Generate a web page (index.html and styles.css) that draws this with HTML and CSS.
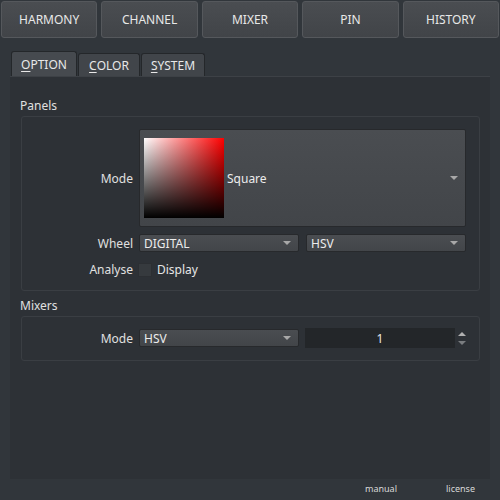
FILE: index.html
```html
<!DOCTYPE html>
<html>
<head>
<meta charset="utf-8">
<link rel="stylesheet" href="styles.css">
</head>
<body>
<div class="topbar">
  <div class="tbtn">HARMONY</div>
  <div class="tbtn">CHANNEL</div>
  <div class="tbtn">MIXER</div>
  <div class="tbtn">PIN</div>
  <div class="tbtn">HISTORY</div>
</div>
<div class="tabs">
  <div class="tab active"><u>O</u>PTION</div>
  <div class="tab"><u>C</u>OLOR</div>
  <div class="tab"><u>S</u>YSTEM</div>
</div>
<div class="panel">
  <div class="section-title">Panels</div>
  <div class="group g1">
    <div class="row mode-row">
      <div class="lbl">Mode</div>
      <div class="combo big">
        <div class="swatch"></div>
        <span class="ctext">Square</span>
        <span class="arrow"></span>
      </div>
    </div>
    <div class="row wheel-row">
      <div class="lbl">Wheel</div>
      <div class="combo half">DIGITAL<span class="arrow"></span></div>
      <div class="combo half">HSV<span class="arrow"></span></div>
    </div>
    <div class="row an-row">
      <div class="lbl">Analyse</div>
      <div class="check"></div>
      <span class="chk-text">Display</span>
    </div>
  </div>
  <div class="section-title mix-title">Mixers</div>
  <div class="group g2">
    <div class="row mix-row">
      <div class="lbl">Mode</div>
      <div class="combo half">HSV<span class="arrow"></span></div>
      <div class="spin">1</div>
      <div class="spin-arrows"><span class="up"></span><span class="down"></span></div>
    </div>
  </div>
</div>
<div class="footer">
  <span class="link manual">manual</span>
  <span class="link license">license</span>
</div>
</body>
</html>
```
FILE: styles.css
```css
html, body {
  margin: 0;
  padding: 0;
  width: 500px;
  height: 500px;
  background: #31363b;
  font-family: "Noto Sans", "Open Sans", sans-serif;
  font-size: 12px;
  color: #e6e6e6;
  overflow: hidden;
}
.topbar {
  display: flex;
  gap: 4px;
  padding: 1px 1px 0 1px;
  height: 37px;
}
.tbtn {
  width: 95px;
  height: 35px;
  border: 1px solid #55585c;
  border-radius: 3px;
  background: linear-gradient(#4a4d51, #414448);
  display: flex;
  align-items: center;
  justify-content: center;
  color: #e8e8e8;
  font-size: 12px;
}
.tabs {
  display: flex;
  align-items: flex-end;
  margin: 13px 0 0 11px;
  height: 25px;
}
.tab {
  padding: 0;
  border: 1px solid #24272a;
  border-bottom: none;
  border-radius: 3px 3px 0 0;
  background: #41454a;
  display: flex;
  align-items: center;
  justify-content: center;
  margin-right: 1px;
  color: #e8e8e8;
  box-sizing: border-box;
  height: 23px;
}
.tab.active {
  height: 25px;
  background: #464a4f;
  width: 66px;
}
.tab:nth-child(2) { width: 62px; }
.tab:nth-child(3) { width: 64px; }
.tab u { text-underline-offset: 2px; }
.panel {
  margin: 0 10px;
  height: 403px;
  background: #2d3136;
  border-top: 1px solid #3d4146;
  padding: 19px 0 0 0;
  box-sizing: border-box;
}
.section-title {
  margin-left: 10px;
  height: 19px;
  line-height: 19px;
  color: #e0e0e0;
}
.mix-title { margin-top: 5px; }
.group {
  margin: 1px 10px 0 11px;
  border: 1px solid #3a3e43;
  border-radius: 3px;
  box-sizing: border-box;
}
.g1 { height: 175px; padding-top: 12px; }
.g2 { height: 45px; padding-top: 11px; }
.row {
  display: flex;
  align-items: center;
}
.lbl {
  width: 111px;
  text-align: right;
  margin-right: 6px;
  color: #e0e0e0;
}
.combo {
  position: relative;
  border: 1px solid #27292c;
  border-radius: 2px;
  background: linear-gradient(#4a4d51, #424549);
  box-sizing: border-box;
  display: flex;
  align-items: center;
  padding-left: 4px;
  color: #ececec;
}
.big {
  width: 327px;
  height: 98px;
}
.swatch {
  width: 80px;
  height: 80px;
  background: linear-gradient(to top, #000, rgba(0,0,0,0)), linear-gradient(to right, #fff, #f00);
  margin-right: 3px;
}
.half {
  width: 160px;
  height: 18px;
  margin-right: 7px;
}
.wheel-row { margin-top: 7px; }
.an-row { margin-top: 9px; }
.check {
  width: 14px;
  height: 14px;
  background: #363a3e;
  border: 1px solid #2c2f33;
  box-sizing: border-box;
  margin-left: -1px;
  margin-right: 5px;
}
.chk-text { color: #e6e6e6; }
.arrow {
  position: absolute;
  right: 7px;
  top: 50%;
  margin-top: -2px;
  width: 0;
  height: 0;
  border-left: 4px solid transparent;
  border-right: 4px solid transparent;
  border-top: 4px solid #a8a8a8;
}
.spin {
  width: 150px;
  height: 20px;
  background: #232629;
  margin-left: -1px;
  display: flex;
  align-items: center;
  justify-content: center;
  color: #e8e8e8;
}
.spin-arrows {
  display: flex;
  flex-direction: column;
  margin-left: 3px;
  gap: 5px;
}
.spin-arrows span {
  width: 0;
  height: 0;
  border-left: 4px solid transparent;
  border-right: 4px solid transparent;
}
.spin-arrows .up { border-bottom: 4px solid #b0b0b0; }
.spin-arrows .down { border-top: 4px solid #7a7d80; }
.footer {
  position: relative;
  height: 20px;
  font-size: 9px;
}
.link {
  position: absolute;
  top: 3px;
  color: #d8d8d8;
}
.manual { left: 365px; }
.license { left: 446px; }
```
